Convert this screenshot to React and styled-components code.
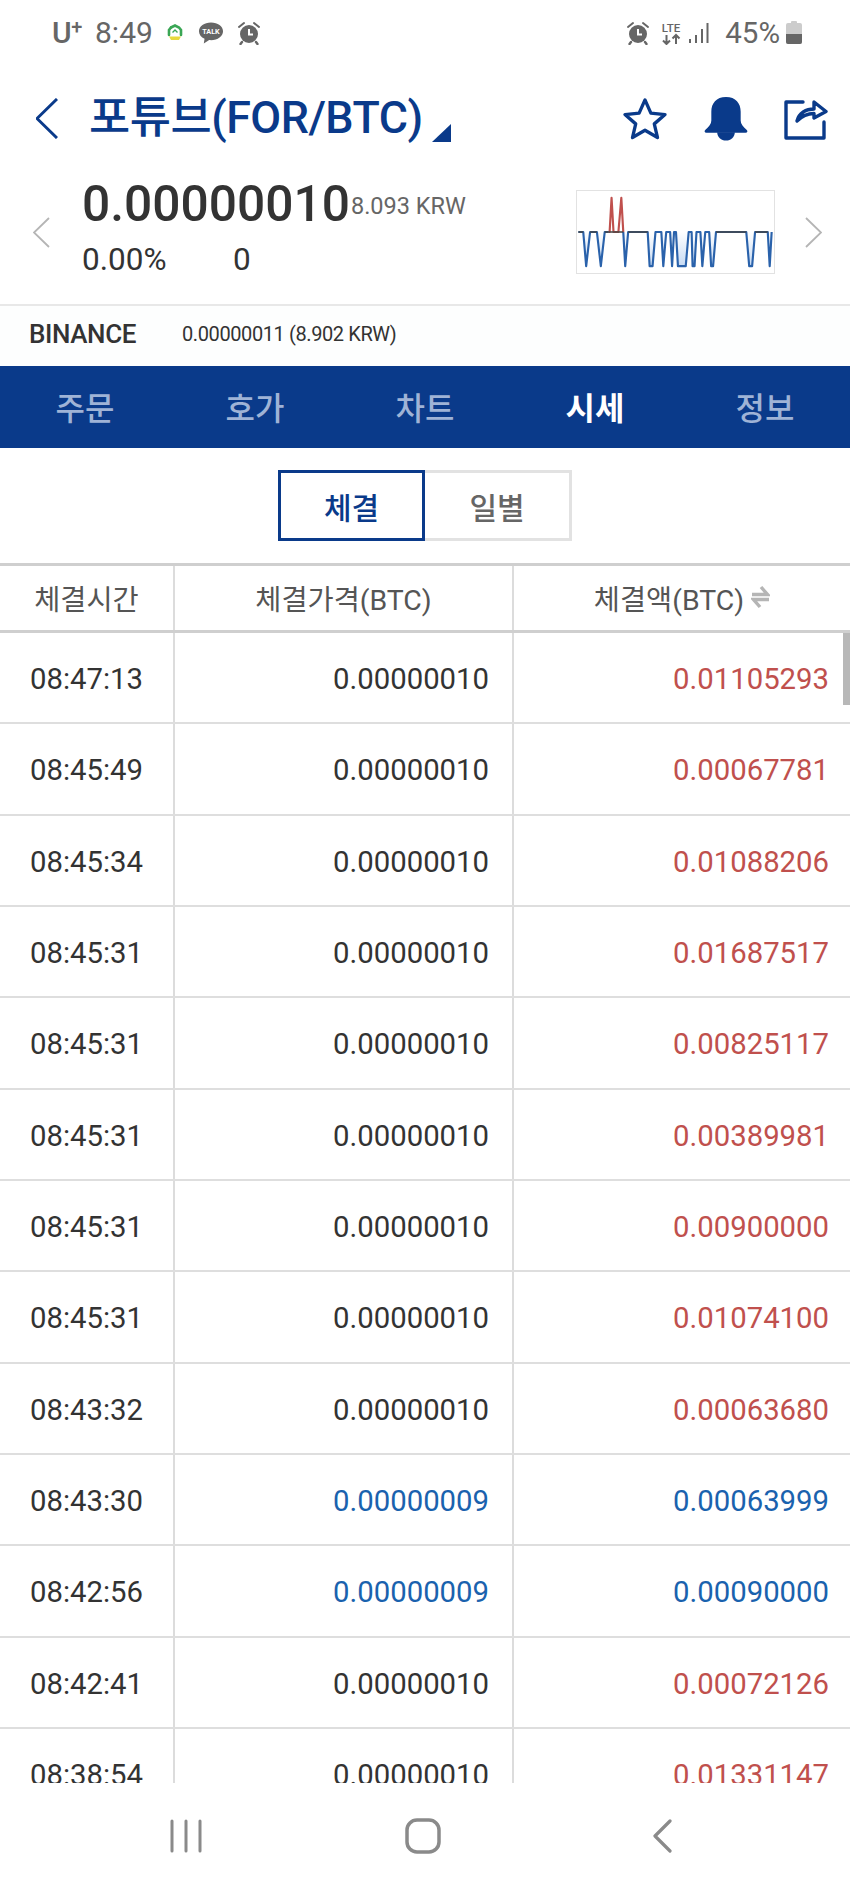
import React from "react";
import styled, { createGlobalStyle } from "styled-components";

const Global = createGlobalStyle`
  html, body { margin: 0; padding: 0; background: #fff; }
  body { font-family: Roboto, "Noto Sans CJK KR", sans-serif; }
`;
const NAVY = "#0a3a8a";
const RED = "#c0504d";
const BLUE = "#1a62ae";

const Page = styled.div`
  width: 850px; height: 1889px; overflow: hidden; background: #fff;
  display: flex; flex-direction: column;
`;
const Status = styled.div`
  height: 65px; flex: none; display: flex; align-items: center; justify-content: space-between;
  padding: 0 48px 0 52px; color: #666; box-sizing: border-box;
`;
const StatusGroup = styled.div`display: flex; align-items: center;`;
const Carrier = styled.span`
  width: 43px; font-size: 30px; font-weight: 500; letter-spacing: -0.5px;
  sup { font-size: 20px; line-height: 0; vertical-align: 9px; }
`;
const Clock = styled.span`width: 55px; font-size: 30px; margin-right: 17px;`;
const Pct = styled.span`font-size: 29.5px; margin: 0 6px 0 16px;`;
const Gap = styled.span`width: ${p => p.$w}px; flex: none;`;
const Header = styled.div`
  height: 105px; flex: none; display: flex; align-items: center; padding: 2px 22px 0 36px; box-sizing: border-box;
`;
const Title = styled.h1`
  margin: 0 0 0 31px; font-size: 44.8px; font-weight: 500; color: ${NAVY}; letter-spacing: -0.5px;
  font-family: Roboto, "Noto Sans CJK KR", sans-serif; line-height: 1;
`;
const Corner = styled.span`
  width: 0; height: 0; margin: 28px 0 0 9px; border-style: solid; border-width: 0 0 18px 19px;
  border-color: transparent transparent ${NAVY} transparent;
`;
const Actions = styled.div`margin-left: auto; display: flex; align-items: center; gap: 35px;`;
const Quote = styled.div`
  height: 136px; flex: none; display: flex; align-items: flex-start; padding: 0 0 0 33px; box-sizing: border-box;
  border-bottom: 2px solid #e8e8e8;
`;
const Chevron = styled.div`align-self: center; display: flex; margin-top: -10px;`;
const PriceCol = styled.div`margin-left: 32px; display: flex; flex-direction: column; width: 494px; flex: none;`;
const PriceRow = styled.div`display: flex; align-items: center; height: 62px; padding-top: 3px; box-sizing: content-box;`;
const Price = styled.span`font-size: 49.7px; font-weight: 500; color: #333; line-height: 60px;`;
const Krw = styled.span`font-size: 23.5px; color: #666; margin: 3px 0 0 1px;`;
const Change = styled.div`display: flex; font-size: 31.5px; color: #333; line-height: 34px; margin-top: 8px;`;
const ChangeCell = styled.span`width: 151px;`;
const Spark = styled.div`
  width: 199px; height: 84px; margin-top: 20px; border: 1px solid #e2e2e2; box-sizing: border-box; flex: none;
  svg { display: block; }
`;
const SparkChevron = styled(Chevron)`margin-left: 30px;`;
const Exchange = styled.div`
  height: 60px; flex: none; display: flex; align-items: center; padding: 0 0 4px 29px; box-sizing: border-box; background: #fdfefe;
`;
const ExName = styled.span`font-size: 26px; font-weight: 500; color: #333; width: 153px; letter-spacing: -0.4px;`;
const ExValue = styled.span`font-size: 20px; color: #333; letter-spacing: -0.4px;`;
const Tabs = styled.div`height: 82px; flex: none; background: ${NAVY}; display: grid; grid-template-columns: repeat(5, 170px);`;
const Tab = styled.div`
  display: flex; align-items: center; justify-content: center; font-size: 32px; padding-bottom: 2px;
  font-weight: ${p => (p.$on ? 700 : 500)}; color: ${p => (p.$on ? "#fff" : "#9fb3d6")};
`;
const Segment = styled.div`height: 115px; flex: none; display: flex; justify-content: center; padding: 22px 0 0 0; box-sizing: border-box;`;
const SegBtn = styled.div`
  height: 71px; width: 147px; box-sizing: border-box; display: flex; align-items: center; justify-content: center;
  font-size: 30px; font-weight: 500;
  border: 3px solid ${p => (p.$on ? NAVY : "#e2e2e2")};
  ${p => (p.$on ? "" : "border-left: 0;")}
  color: ${p => (p.$on ? NAVY : "#666")};
`;
const Table = styled.div`position: relative; height: 1220px; flex: none; box-sizing: border-box; overflow: hidden; border-top: 3px solid #cfcfcf;`;
const HeadRow = styled.div`
  height: 67px; box-sizing: border-box; display: grid; grid-template-columns: 173px 339px 1fr; border-bottom: 3px solid #cfcfcf;
`;
const HeadCell = styled.div`
  display: flex; align-items: center; justify-content: center; gap: 7px; font-size: 28.4px; color: #555; padding-bottom: 2px;
  & + & { border-left: 2px solid #dcdcdc; }
`;
const Row = styled.div`
  height: 91.33px; box-sizing: border-box; display: grid; grid-template-columns: 173px 339px 1fr; border-bottom: 2px solid #dedede;
`;
const Cell = styled.div`
  display: flex; align-items: center; font-size: 29.3px; color: ${p => p.$color || "#333"}; padding-top: 3px;
  justify-content: ${p => (p.$pad ? "flex-end" : "center")};
  padding-right: ${p => p.$pad || 0}px;
  & + & { border-left: 2px solid #dcdcdc; }
`;
const Scroll = styled.div`position: absolute; right: 0; top: 67px; width: 7px; height: 72px; background: #b8b8b8;`;
const NavBar = styled.div`flex: 1; display: flex; align-items: center; padding-left: 170px;`;

const rows = [
  ["08:47:13", "0.00000010", "0.01105293", 0],
  ["08:45:49", "0.00000010", "0.00067781", 0],
  ["08:45:34", "0.00000010", "0.01088206", 0],
  ["08:45:31", "0.00000010", "0.01687517", 0],
  ["08:45:31", "0.00000010", "0.00825117", 0],
  ["08:45:31", "0.00000010", "0.00389981", 0],
  ["08:45:31", "0.00000010", "0.00900000", 0],
  ["08:45:31", "0.00000010", "0.01074100", 0],
  ["08:43:32", "0.00000010", "0.00063680", 0],
  ["08:43:30", "0.00000009", "0.00063999", 1],
  ["08:42:56", "0.00000009", "0.00090000", 1],
  ["08:42:41", "0.00000010", "0.00072126", 0],
  ["08:38:54", "0.00000010", "0.01331147", 0],
];

const Alarm = () => (
  <svg width="24" height="24" viewBox="0 0 24 24" fill="#666">
    <circle cx="12" cy="13" r="9" />
    <path d="M2 6 L7 2 M22 6 L17 2" stroke="#666" strokeWidth="2" strokeLinecap="round" />
    <path d="M5 21l-1.500 2M19 21l1.500 2" stroke="#666" strokeWidth="2.400" strokeLinecap="round" />
    <path d="M12 8v5.500h4" stroke="#fff" strokeWidth="2" fill="none" />
  </svg>
);
const Talk = () => (
  <svg width="26" height="24" viewBox="0 0 27 24">
    <path d="M13.500 1C6.500 1 1 5 1 10.200c0 3.400 2.300 6.200 5.800 7.800L6 23l5.600-3.700c.6.100 1.300.1 1.900.1 7 0 12.500-4 12.500-9.200S20.500 1 13.500 1z" fill="#666" />
    <text x="13.500" y="13.500" textAnchor="middle" fontSize="7.500" fontWeight="700" fill="#fff" fontFamily="Roboto, sans-serif">TALK</text>
  </svg>
);
const Shield = () => (
  <svg width="16" height="18" viewBox="0 0 16 18" fill="none">
    <path d="M4 3.500 8 1.500l4 2 2 2.500v5" stroke="#3aa655" strokeWidth="2.600" strokeLinecap="round" />
    <path d="M2 11V6l2-2.500" stroke="#3aa655" strokeWidth="2.600" strokeLinecap="round" />
    <path d="M2 12.500h12L12 16H4z" fill="#e8d93c" />
    <path d="M5.500 8.500 8 6l2.500 2.500" stroke="#3aa655" strokeWidth="1.400" />
  </svg>
);
const Lte = () => (
  <svg width="22" height="24" viewBox="0 0 22 24" fill="#666">
    <text x="11" y="10.500" textAnchor="middle" fontSize="11.500" fontWeight="500" fontFamily="Roboto, sans-serif">LTE</text>
    <path d="M6.500 14v9M3 19.500l3.500 3.500 3.500-3.500M16 23v-9M12.500 17.500 16 14l3.500 3.500" stroke="#666" strokeWidth="2" fill="none" />
  </svg>
);
const Signal = () => (
  <svg width="20" height="22" viewBox="0 0 20 22" fill="#666">
    <rect x="0" y="17" width="2" height="4" /><rect x="6" y="13" width="2" height="8" />
    <rect x="12" y="7" width="2" height="14" /><rect x="17.500" y="1" width="2" height="20" />
  </svg>
);
const Battery = () => (
  <svg width="16" height="23" viewBox="0 0 16 23">
    <rect x="5" y="0" width="6" height="3" rx="1" fill="#ccc" />
    <rect x="0" y="2" width="16" height="21" rx="2" fill="#ccc" />
    <path d="M0 13h16v8a2 2 0 0 1-2 2H2a2 2 0 0 1-2-2z" fill="#666" />
  </svg>
);
const Thin = ({ w, h, color, sw, flip }) => (
  <svg width={w} height={h} viewBox={`0 0 ${w} ${h}`} fill="none">
    <path d={flip ? `M1 1 L${w - 1} ${h / 2} L1 ${h - 1}` : `M${w - 1} 1 L1 ${h / 2} L${w - 1} ${h - 1}`} stroke={color} strokeWidth={sw} />
  </svg>
);
const Star = () => (
  <svg width="46" height="43" viewBox="0 0 46 44" fill="none">
    <path d="M23 3l6 13.500 14.500 1.500-11 9.500 3.300 14L23 34l-12.800 7.500 3.300-14-11-9.500L17 16.500z" stroke={NAVY} strokeWidth="3.400" strokeLinejoin="round" />
  </svg>
);
const Bell = () => (
  <svg width="46" height="45" viewBox="0 0 46 46" fill={NAVY}>
    <path d="M23 1c-10 0-15 6.500-15 15v9c0 3.500-2.500 6.500-6 9.500-1.500 1.200-1 3 1 3h40c2 0 2.500-1.800 1-3-3.500-3-6-6-6-9.500v-9C38 7.500 33 1 23 1z" />
    <path d="M14 37h18c0 5-4 8.500-9 8.500s-9-3.500-9-8.500z" />
  </svg>
);
const Share = () => (
  <svg width="44" height="42" viewBox="0 0 44 42" fill="none" stroke={NAVY} strokeWidth="3.400" strokeLinejoin="round" strokeLinecap="round">
    <path d="M19 4H2v36h38V24" />
    <path d="M13 23c2-8 9-12 17-12V4l12 9.500L30 20v-4.500c-7 0-12 2.500-17 7.500z" />
  </svg>
);
const BLUE_LINE = "M0 42H5L8 77L12 42H19L23 77L27 42H31M46 42L48 77L51 42H71L73 77H76L79 42H85L87 77L90 42H94L96 77L98 42H100L102 77H110L113 42H116L117 77H119L121 42H125L127 77L130 42H134L136 77H138L141 42H172L175 77H178L181 42H194L196 77L198 42";
const RED_LINE = "M31 42H32L34 7L36 42H41L44 7L46 42";
const Sparkline = () => (
  <svg width="197" height="82" viewBox="0 0 199 84" fill="none">
    <defs>
      <linearGradient id="dip" x1="0" y1="0" x2="0" y2="1">
        <stop offset="0" stopColor="#ffffff" />
        <stop offset="1" stopColor="#c6daf3" />
      </linearGradient>
    </defs>
    <path d={`${BLUE_LINE}Z`} fill="url(#dip)" />
    <path d={BLUE_LINE} stroke="#2a62ab" strokeWidth="2.200" strokeLinejoin="round" />
    <path d={RED_LINE} stroke="#c0504d" strokeWidth="2.200" strokeLinejoin="round" />
    <path d="M0 42H5M12 42H19M27 42H46M51 42H71M141 42H172M181 42H194" stroke="#444" strokeWidth="1.400" />
  </svg>
);
const SwapIcon = () => (
  <svg width="19" height="24" viewBox="0 0 19 24" fill="none" stroke="#b5b5b5" strokeWidth="3.400">
    <path d="M1 9.500H16.500L10 2" />
    <path d="M18 14.500H2.500L9 22" />
  </svg>
);
const NavMenu = () => (
  <svg width="32" height="34" viewBox="0 0 32 34" stroke="#8a8a8a" strokeWidth="3" strokeLinecap="round">
    <path d="M2 2v30M16 2v30M30 2v30" />
  </svg>
);
const HomeIcon = styled.svg`margin-left: 203px;`;
const BackIcon = styled.svg`margin-left: 211px;`;
const NavHome = () => (
  <HomeIcon width="36" height="36" viewBox="0 0 36 36" fill="none" stroke="#8a8a8a" strokeWidth="3.500">
    <rect x="2" y="2" width="32" height="32" rx="10" />
  </HomeIcon>
);
const NavBack = () => (
  <BackIcon width="20" height="34" viewBox="0 0 20 34" fill="none" stroke="#8a8a8a" strokeWidth="3.200" strokeLinecap="round" strokeLinejoin="round">
    <path d="M18 2L3 17l15 15" />
  </BackIcon>
);

export default function App() {
  return (
    <Page>
      <Global />
      <Status>
        <StatusGroup>
          <Carrier>U<sup>+</sup></Carrier>
          <Clock>8:49</Clock>
          <Shield />
          <Gap $w={15} />
          <Talk />
          <Gap $w={13} />
          <Alarm />
        </StatusGroup>
        <StatusGroup>
          <Alarm />
          <Gap $w={10} />
          <Lte />
          <Gap $w={7} />
          <Signal />
          <Pct>45%</Pct>
          <Battery />
        </StatusGroup>
      </Status>
      <Header>
        <Thin w={22} h={41} color={NAVY} sw={3} />
        <Title>포튜브(FOR/BTC)</Title>
        <Corner />
        <Actions>
          <Star />
          <Bell />
          <Share />
        </Actions>
      </Header>
      <Quote>
        <Chevron><Thin w={17} h={31} color="#b5b5b5" sw={1.800} /></Chevron>
        <PriceCol>
          <PriceRow>
            <Price>0.00000010</Price>
            <Krw>8.093 KRW</Krw>
          </PriceRow>
          <Change>
            <ChangeCell>0.00%</ChangeCell>
            <ChangeCell>0</ChangeCell>
          </Change>
        </PriceCol>
        <Spark><Sparkline /></Spark>
        <SparkChevron><Thin w={17} h={31} color="#b5b5b5" sw={1.800} flip /></SparkChevron>
      </Quote>
      <Exchange>
        <ExName>BINANCE</ExName>
        <ExValue>0.00000011 (8.902 KRW)</ExValue>
      </Exchange>
      <Tabs>
        <Tab>주문</Tab>
        <Tab>호가</Tab>
        <Tab>차트</Tab>
        <Tab $on>시세</Tab>
        <Tab>정보</Tab>
      </Tabs>
      <Segment>
        <SegBtn $on>체결</SegBtn>
        <SegBtn>일별</SegBtn>
      </Segment>
      <Table>
        <HeadRow>
          <HeadCell>체결시간</HeadCell>
          <HeadCell>체결가격(BTC)</HeadCell>
          <HeadCell>체결액(BTC)<SwapIcon /></HeadCell>
        </HeadRow>
        {rows.map((r, i) => (
          <Row key={i}>
            <Cell>{r[0]}</Cell>
            <Cell $pad={23} $color={r[3] ? BLUE : undefined}>{r[1]}</Cell>
            <Cell $pad={21} $color={r[3] ? BLUE : RED}>{r[2]}</Cell>
          </Row>
        ))}
        <Scroll />
      </Table>
      <NavBar>
        <NavMenu />
        <NavHome />
        <NavBack />
      </NavBar>
    </Page>
  );
}
